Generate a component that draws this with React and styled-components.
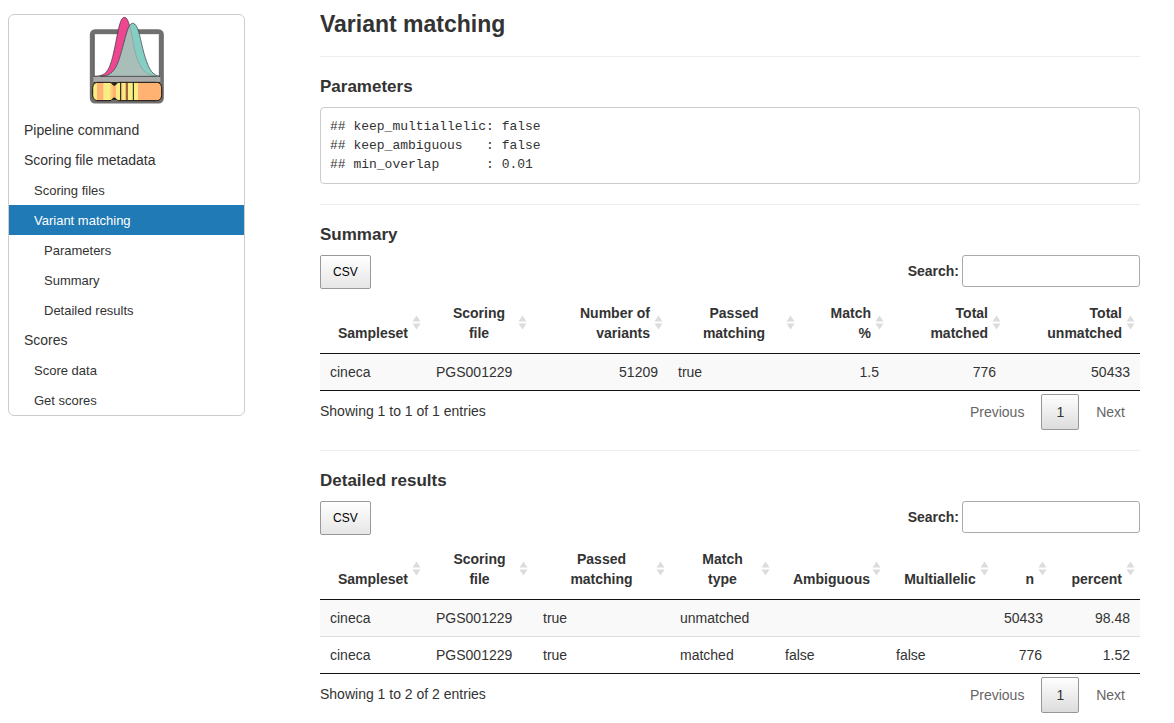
import React from "react";
import styled, { createGlobalStyle } from "styled-components";

const GlobalStyle = createGlobalStyle`
  * { box-sizing: border-box; }
  body {
    margin: 0;
    background: #fff;
    color: #333;
    font: 14px/20px "Helvetica Neue", Helvetica, "Liberation Sans", Arial, sans-serif;
  }
`;

const Page = styled.div`
  display: grid;
  grid-template-columns: 237px minmax(0, 1fr);
  column-gap: 75px;
  align-items: start;
  padding: 10px 34px 10px 8px;
`;

const Sidebar = styled.nav`
  margin-top: 4px;
  border: 1px solid #ccc;
  border-radius: 6px;
`;

const LogoBox = styled.div`
  display: flex;
  justify-content: center;
  height: 100px;
  padding-top: 1px;
`;

const NavList = styled.ul`
  list-style: none;
  margin: 0;
  padding: 0;
`;

const NavLink = styled.a`
  display: block;
  padding: ${({ $level }) => ($level ? "6px 0 4px" : "5px 0")};
  padding-left: ${({ $level }) => 15 + $level * 10}px;
  font-size: ${({ $level }) => ($level ? 13 : 14)}px;
  line-height: 20px;
  text-decoration: none;
  color: ${({ $active }) => ($active ? "#fff" : "#333")};
  background: ${({ $active }) => ($active ? "#1f7ab6" : "transparent")};
`;

const Title = styled.h1`
  margin: 0 0 18px;
  font-size: 23px;
  line-height: 28px;
`;

const Section = styled.section`
  border-top: 1px solid #eee;
  padding: 20px 0;
`;

const SectionTitle = styled.h2`
  margin: 0 0 10px;
  font-size: 17px;
  line-height: 20px;
`;

const Output = styled.pre`
  margin: 0;
  padding: 9px;
  border: 1px solid #ccc;
  border-radius: 4px;
  font: 13px/19px "Liberation Mono", monospace;
`;

const Toolbar = styled.div`
  display: flex;
  justify-content: space-between;
  align-items: flex-start;
  height: 34px;
  margin-bottom: 4px;
`;

const ExportButton = styled.button`
  height: 34px;
  padding: 0 12px;
  border: 1px solid #999;
  border-radius: 2px;
  background: linear-gradient(#fff, #e6e6e6);
  color: #000;
  font-family: inherit;
  font-size: 12px;
`;

const SearchLabel = styled.label`
  display: flex;
  align-items: center;
  gap: 3px;
  font-weight: bold;
`;

const SearchInput = styled.input`
  width: 178px;
  height: 32px;
  padding: 5px;
  border: 1px solid #aaa;
  border-radius: 3px;
  background: #fff;
  font: inherit;
`;

const Table = styled.table`
  width: 100%;
  table-layout: fixed;
  border-collapse: separate;
  border-spacing: 0;
  border-bottom: 1px solid #111;
`;

const HeadCell = styled.th`
  position: relative;
  height: 61px;
  padding: 10px 18px;
  border-bottom: 1px solid #111;
  vertical-align: bottom;
  text-align: ${({ $numeric }) => ($numeric ? "right" : "center")};
`;

const SortIcon = styled.svg`
  position: absolute;
  right: 5px;
  top: 22px;
`;

const Row = styled.tr`
  background: ${({ $odd }) => ($odd ? "#f9f9f9" : "#fff")};
`;

const Cell = styled.td`
  padding: 8px 10px;
  text-align: ${({ $numeric }) => ($numeric ? "right" : "left")};
  tr + tr > & { border-top: 1px solid #ddd; }
`;

const Footer = styled.div`
  display: flex;
  justify-content: space-between;
  margin-top: 3px;
`;

const Info = styled.div`
  padding-top: 7px;
`;

const Pager = styled.div`
  display: flex;
  gap: 2px;
`;

const PageButton = styled.button`
  height: 36px;
  padding: 0 14px;
  border: 1px solid ${({ $current }) => ($current ? "#979797" : "transparent")};
  border-radius: 2px;
  background: ${({ $current }) => ($current ? "linear-gradient(#fff, #dcdcdc)" : "transparent")};
  color: ${({ $current }) => ($current ? "#333" : "#666")};
  font: inherit;
`;

const navItems = [
  ["Pipeline command", 0],
  ["Scoring file metadata", 0],
  ["Scoring files", 1],
  ["Variant matching", 1],
  ["Parameters", 2],
  ["Summary", 2],
  ["Detailed results", 2],
  ["Scores", 0],
  ["Score data", 1],
  ["Get scores", 1],
];

const summary = {
  id: "summary",
  title: "Summary",
  info: "Showing 1 to 1 of 1 entries",
  columns: [
    { lines: ["Sampleset"], width: 106 },
    { lines: ["Scoring", "file"], width: 106 },
    { lines: ["Number of", "variants"], width: 136, numeric: true },
    { lines: ["Passed", "matching"], width: 132 },
    { lines: ["Match", "%"], width: 89, numeric: true },
    { lines: ["Total", "matched"], width: 117, numeric: true },
    { lines: ["Total", "unmatched"], width: 134, numeric: true },
  ],
  rows: [["cineca", "PGS001229", "51209", "true", "1.5", "776", "50433"]],
};

const details = {
  id: "detailed-results",
  title: "Detailed results",
  info: "Showing 1 to 2 of 2 entries",
  columns: [
    { lines: ["Sampleset"], width: 106 },
    { lines: ["Scoring", "file"], width: 107 },
    { lines: ["Passed", "matching"], width: 137 },
    { lines: ["Match", "type"], width: 105 },
    { lines: ["Ambiguous"], width: 111 },
    { lines: ["Multiallelic"], width: 108 },
    { lines: ["n"], width: 58, numeric: true },
    { lines: ["percent"], width: 88, numeric: true },
  ],
  rows: [
    ["cineca", "PGS001229", "true", "unmatched", "", "", "50433", "98.48"],
    ["cineca", "PGS001229", "true", "matched", "false", "false", "776", "1.52"],
  ],
};

const parameters = `## keep_multiallelic: false
## keep_ambiguous   : false
## min_overlap      : 0.01`;

const chromosome =
  "M54 223H90C96 223 97 232 103 232C109 232 110 223 116 223H230C240 223 245 232 245 241V260C245 270 240 278 230 278H116C110 278 109 270 103 270C97 270 96 278 90 278H54C43 278 38 269 38 260V241C38 232 43 223 54 223Z";

function Logo() {
  return (
    <svg width="77" height="88" viewBox="24 24 231 264" role="img" aria-label="Pipeline logo">
      <defs>
        <clipPath id="chromosome"><path d={chromosome} /></clipPath>
      </defs>
      <rect x="36" y="70" width="209" height="210" rx="9" fill="#fff" stroke="#716e6e" strokeWidth="13" />
      <rect x="43" y="77" width="195" height="196" rx="2" fill="#fff" stroke="#222" strokeWidth="2" />
      <path d="M42 222H240V276H42Z" fill="#2a2626" />
      <path d="M40 206H241V222H40Z" fill="#aaa" />
      <path
        d="M43 205C78 205 87 188 98 146C112 91 117 28 133 28C151 28 153 92 168 142C181 184 194 205 228 205Z"
        fill="#ee4791" stroke="#333" strokeWidth="2"
      />
      <path
        d="M62 205C96 203 108 187 122 139C137 90 143 46 158 46C177 46 181 102 195 146C208 187 218 202 240 205Z"
        fill="#85cec3"
      />
      <path
        d="M62 205C96 203 108 187 122 139C130 112 139 75 149 54C158 83 160 116 168 142C181 184 198 203 231 205Z"
        fill="#a9bdb9"
      />
      <path d="M149 54C158 83 160 116 168 142C181 184 198 203 231 205" fill="none" stroke="#8c9997" strokeWidth="2" />
      <path
        d="M62 205C96 203 108 187 122 139C137 90 143 46 158 46C177 46 181 102 195 146C208 187 218 202 240 205Z"
        fill="none" stroke="#333" strokeWidth="2"
      />
      <path d={chromosome} fill="#ffb272" />
      <g clipPath="url(#chromosome)">
        <path d="M38 222H51V278H38ZM70 222H92V278H70ZM108 222H174V278H108Z" fill="#f9ed82" />
        <path d="M91 222H98V278H91ZM121 222H128V278H121Z" fill="#fcd17a" />
        <path d="M137 222H144V278H137Z" fill="#9f663d" />
        <path d="M122 222V278M160 222V278" stroke="#111" strokeWidth="3" />
      </g>
      <path d={chromosome} fill="none" stroke="#111" strokeWidth="3" />
    </svg>
  );
}

function DataTable({ id, title, info, columns, rows }) {
  return (
    <Section id={id}>
      <SectionTitle>{title}</SectionTitle>
      <Toolbar>
        <ExportButton type="button">CSV</ExportButton>
        <SearchLabel htmlFor={`${id}-search`}>
          Search:
          <SearchInput id={`${id}-search`} type="search" />
        </SearchLabel>
      </Toolbar>
      <Table>
        <colgroup>
          {columns.map((c, i) => <col key={i} width={c.width} />)}
        </colgroup>
        <thead>
          <tr>
            {columns.map((c, i) => (
              <HeadCell key={i} scope="col" $numeric={c.numeric}>
                {c.lines.map((line, n) => (
                  <React.Fragment key={line}>{n > 0 && <br />}{line}</React.Fragment>
                ))}
                <SortIcon width="9" height="15" viewBox="0 0 9 15" aria-hidden="true">
                  <path d="M4.500 0.500L8.500 6.500H0.500ZM0.500 8.500H8.500L4.500 14.500Z" fill="#dcdcdc" />
                </SortIcon>
              </HeadCell>
            ))}
          </tr>
        </thead>
        <tbody>
          {rows.map((row, r) => (
            <Row key={r} $odd={r % 2 === 0}>
              {row.map((value, i) => (
                <Cell key={i} $numeric={columns[i].numeric}>{value}</Cell>
              ))}
            </Row>
          ))}
        </tbody>
      </Table>
      <Footer>
        <Info>{info}</Info>
        <Pager>
          <PageButton type="button">Previous</PageButton>
          <PageButton type="button" $current aria-current="page">1</PageButton>
          <PageButton type="button">Next</PageButton>
        </Pager>
      </Footer>
    </Section>
  );
}

export default function App() {
  return (
    <>
      <GlobalStyle />
      <Page>
        <Sidebar>
          <LogoBox><Logo /></LogoBox>
          <NavList>
            {navItems.map(([label, level]) => (
              <li key={label}>
                <NavLink
                  href={`#${label.toLowerCase().replace(/ /g, "-")}`}
                  $level={level}
                  $active={label === "Variant matching"}
                >
                  {label}
                </NavLink>
              </li>
            ))}
          </NavList>
        </Sidebar>
        <main>
          <Title id="variant-matching">Variant matching</Title>
          <Section id="parameters">
            <SectionTitle>Parameters</SectionTitle>
            <Output>{parameters}</Output>
          </Section>
          <DataTable {...summary} />
          <DataTable {...details} />
        </main>
      </Page>
    </>
  );
}
